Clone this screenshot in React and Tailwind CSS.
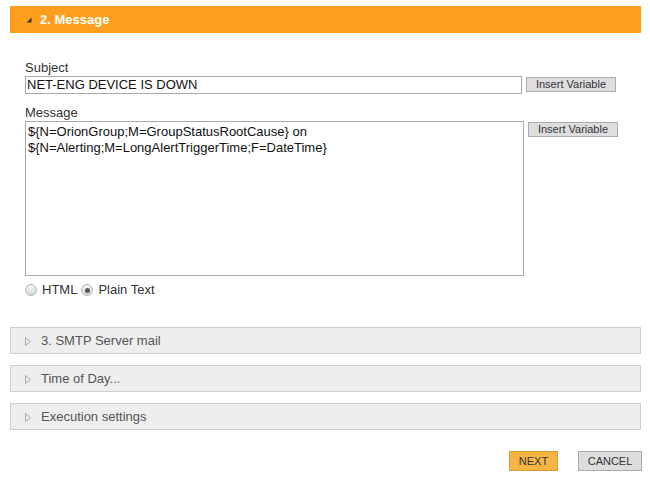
import React from "react";

const font = { fontFamily: '"Liberation Sans", Arial, sans-serif' };

function Radio({ checked }) {
  return (
    <span className="inline-flex items-center justify-center w-[12px] h-[12px] rounded-full border border-[#b5b5b5] bg-[linear-gradient(#f4f4f4,#d8d8d8)]">
      {checked && <span className="w-[5px] h-[5px] rounded-full bg-[#5a5a5a]" />}
    </span>
  );
}

function Collapsed({ title }) {
  return (
    <div className="h-[27px] w-[631px] bg-[#eeeeee] border border-[#cfcfcf] flex items-center pl-[14px]">
      <svg width="6" height="9" viewBox="0 0 6 9" className="mt-[2px]">
        <polygon points="0.5,0.5 5.5,4.5 0.5,8.5" fill="none" stroke="#a8a8a8" strokeWidth="1" />
      </svg>
      <span className="ml-[10px] text-[13px] text-[#555555]">{title}</span>
    </div>
  );
}

export default function App() {
  return (
    <div className="w-[650px] h-[481px] bg-white pt-[6px] pl-[10px]" style={font}>
      <div className="w-[631px] h-[27px] bg-[#fd9e1d] flex items-center pl-[16px]">
        <svg width="6" height="6" viewBox="0 0 6 6">
          <polygon points="5.5,0.5 5.5,5.5 0.5,5.5" fill="#3a3a3a" />
        </svg>
        <span className="ml-[8px] text-[13px] font-bold text-white">2. Message</span>
      </div>

      <div className="pl-[15px] pt-[27px]">
        <div className="text-[13px] leading-[16px] text-[#333]">Subject</div>
        <div className="flex items-start">
          <div className="w-[497px] h-[18px] border border-[#a9a9a9] flex items-center pl-[1px] text-[13px] text-[#111]">
            NET-ENG DEVICE IS DOWN
          </div>
          <div className="ml-[4px] mt-[1px] w-[90px] h-[15px] bg-[#dedede] border border-[#ababab] flex items-center justify-center text-[11px] text-[#333]">
            Insert Variable
          </div>
        </div>

        <div className="mt-[11px] text-[13px] leading-[16px] text-[#333]">Message</div>
        <div className="flex items-start">
          <div className="w-[499px] h-[155px] border border-[#a9a9a9] pl-[2px] pt-[2px] text-[13px] leading-[16px] text-[#111]">
            <div>{"${N=OrionGroup;M=GroupStatusRootCause} on"}</div>
            <div>{"${N=Alerting;M=LongAlertTriggerTime;F=DateTime}"}</div>
          </div>
          <div className="ml-[4px] mt-[1px] w-[90px] h-[15px] bg-[#dedede] border border-[#ababab] flex items-center justify-center text-[11px] text-[#333]">
            Insert Variable
          </div>
        </div>

        <div className="mt-[6px] h-[16px] flex items-center text-[13px] text-[#333]">
          <Radio />
          <span className="ml-[5px]">HTML</span>
          <span className="ml-[4px] flex"><Radio checked /></span>
          <span className="ml-[5px]">Plain Text</span>
        </div>
      </div>

      <div className="mt-[29px] flex flex-col gap-[11px]">
        <Collapsed title="3. SMTP Server mail" />
        <Collapsed title="Time of Day..." />
        <Collapsed title="Execution settings" />
      </div>

      <div className="mt-[21px] w-[632px] flex justify-end gap-[20px]">
        <div className="w-[49px] h-[20px] bg-[#f6b444] border border-[#d99a34] flex items-center justify-center text-[11px] text-[#333]">
          NEXT
        </div>
        <div className="w-[64px] h-[20px] bg-[#dddddd] border border-[#aaaaaa] flex items-center justify-center text-[11px] text-[#333]">
          CANCEL
        </div>
      </div>
    </div>
  );
}
